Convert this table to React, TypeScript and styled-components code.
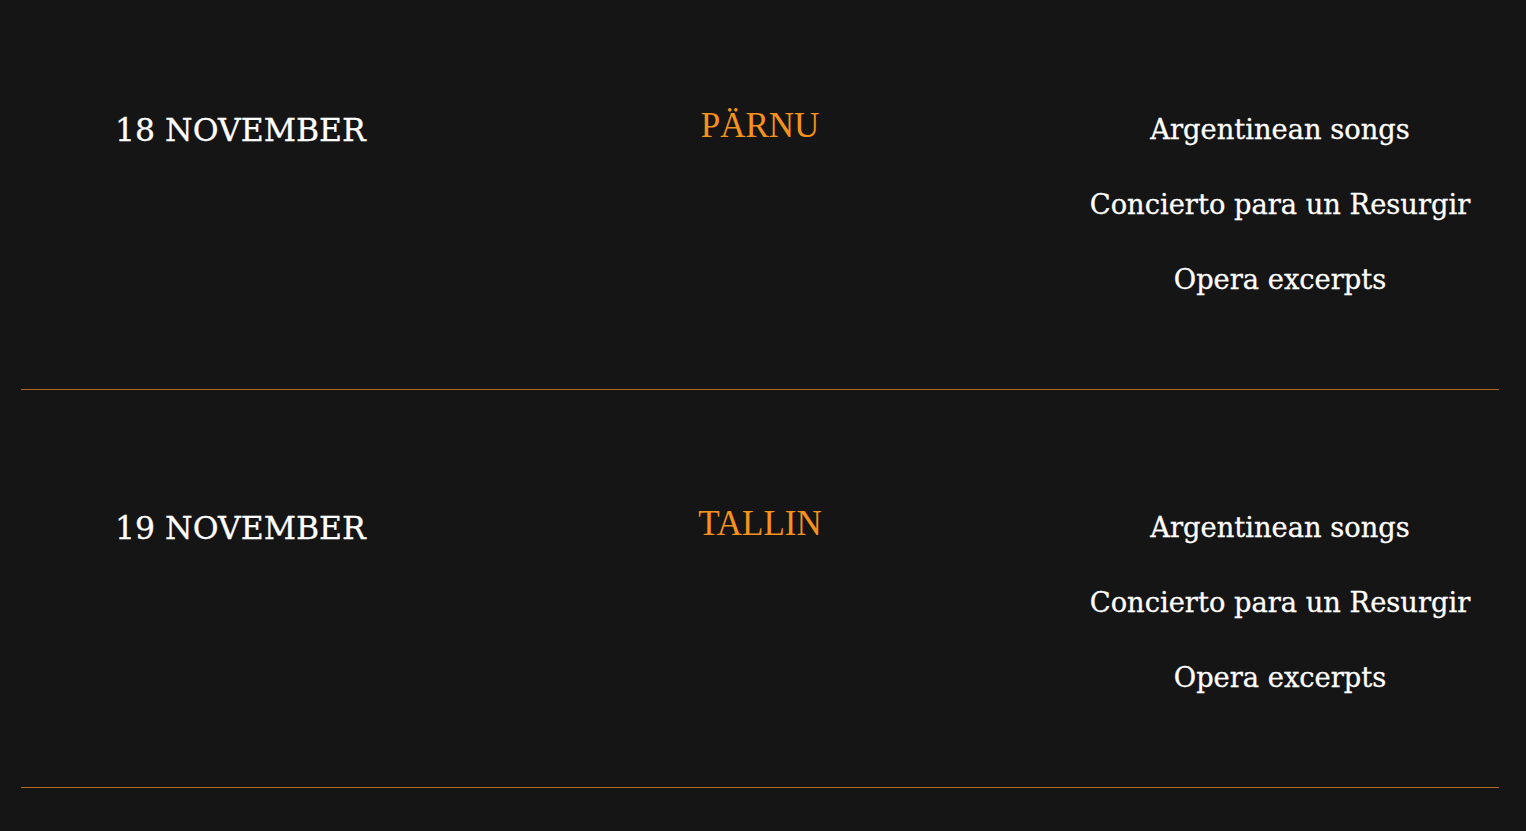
import React from "react";
import styled, { createGlobalStyle } from "styled-components";

const Global = createGlobalStyle`
  html, body { margin: 0; padding: 0; background: #151515; }
  body { font-family: "DejaVu Serif", "Liberation Serif", serif; color: #f4f4f4; }
`;

const Page = styled.main`
  padding: 0 27px 0 21px;
  background: #151515;
  min-height: 831px;
  box-sizing: border-box;
`;

const Row = styled.section<{ $first?: boolean }>`
  display: grid;
  grid-template-columns: 438px 1fr 438px;
  align-items: start;
  padding: ${(p) => (p.$first ? "110px" : "118px")} 0 90px;
`;

const Divider = styled.hr`
  margin: 0;
  border: 0;
  height: 1px;
  background: #b0691d;
`;

const DateCell = styled.h2`
  margin: 0;
  padding-left: 94px;
  font-family: "DejaVu Serif", serif;
  font-weight: 400;
  font-size: 31.5px;
  line-height: 40px;
  color: #ffffff;
  -webkit-text-stroke: 0.3px #ffffff;
`;

const City = styled.h3`
  margin: 0;
  text-align: center;
  font-family: "Liberation Serif", "Times New Roman", serif;
  font-weight: 400;
  font-size: 35px;
  line-height: 32px;
  color: #f5921b;
`;

const Events = styled.ul`
  list-style: none;
  margin: 0;
  padding: 0;
  display: flex;
  flex-direction: column;
  align-items: center;
  gap: 36px;
`;

const Event = styled.li`
  font-family: "DejaVu Serif", serif;
  font-size: 27.3px;
  line-height: 39px;
  color: #ffffff;
  -webkit-text-stroke: 0.3px #ffffff;
  text-align: center;
  white-space: nowrap;
`;

const concerts = [
  { date: "18 NOVEMBER", city: "PÄRNU" },
  { date: "19 NOVEMBER", city: "TALLIN" },
];

const programme = ["Argentinean songs", "Concierto para un Resurgir", "Opera excerpts"];

export default function App() {
  return (
    <>
      <Global />
      <Page>
        {concerts.map((c, i) => (
          <React.Fragment key={c.date}>
            <Row $first={i === 0}>
              <DateCell>{c.date}</DateCell>
              <City>{c.city}</City>
              <Events>
                {programme.map((t) => (
                  <Event key={t}>{t}</Event>
                ))}
              </Events>
            </Row>
            <Divider />
          </React.Fragment>
        ))}
      </Page>
    </>
  );
}
